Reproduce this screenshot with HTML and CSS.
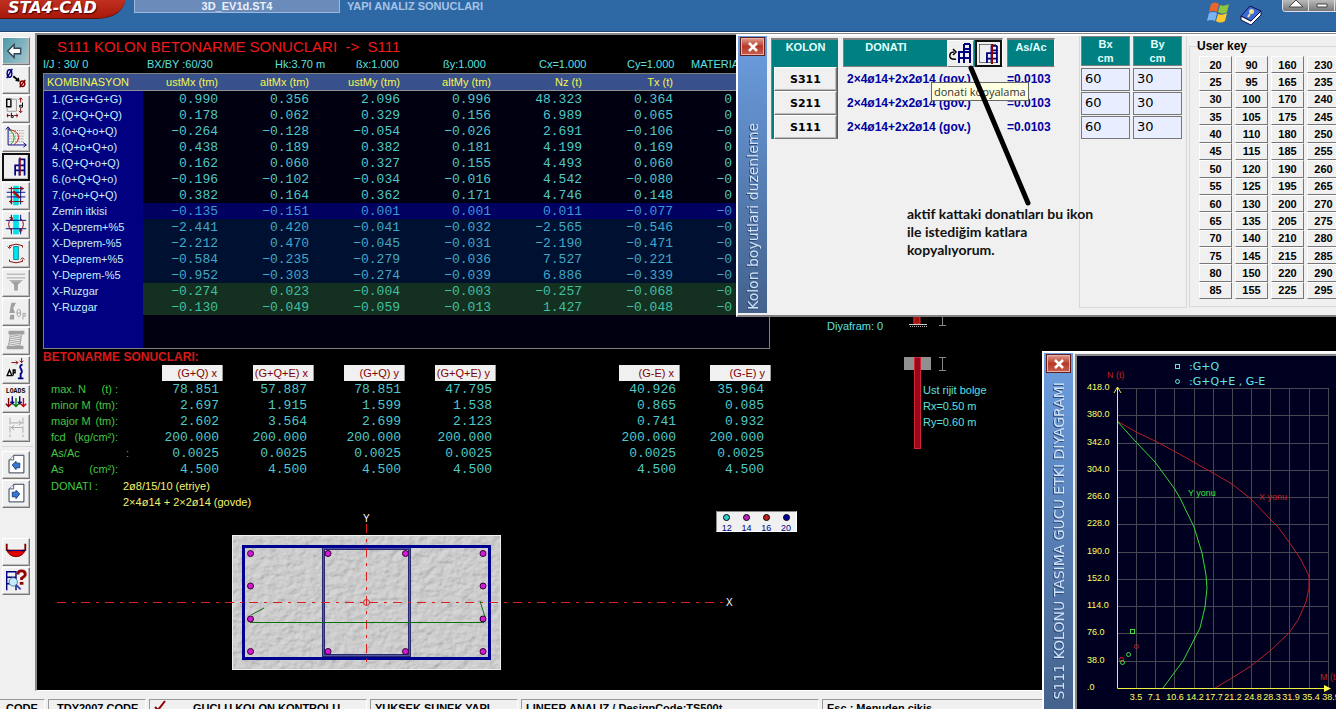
FILE: index.html
```html
<!DOCTYPE html>
<html lang="tr">
<head>
  <meta charset="UTF-8">
  <title>STA4-CAD</title>
  <meta name="viewport" content="width=device-width, initial-scale=1.0">
  <link rel="stylesheet" href="styles.css">
</head>
<body>
  <!-- Shared shapes -->
  <svg class="defs" width="0" height="0" aria-hidden="true">
    <symbol id="frame" viewBox="0 0 14 22">
      <path d="M2 21V10M7 21V2M13 21V2M7 2H13M7 7H13M1 10H14M1 16H14" fill="none" stroke="#000080" stroke-width="2"/>
    </symbol>
    <symbol id="page" viewBox="0 0 28 28">
      <path d="M6.500 8.500L11.500 3.500H22.500V22.500H6.500Z" fill="#fff" stroke="#234"/>
      <path d="M6.500 8.500H11.500V3.500" fill="#eef" stroke="#456"/>
    </symbol>
  </svg>

  <header class="topbar">
    <div class="logo">STA4-CAD</div>
    <div class="file-tab">3D_EV1d.ST4</div>
    <div class="page-name">YAPI ANALIZ SONUCLARI</div>
    <div class="top-icons">
      <svg width="24" height="24" viewBox="0 0 24 24">
        <path d="M4 2Q8 -1 12 2L10 10Q6 8 2 10Z" fill="#e8662c"/>
        <path d="M13 3Q17 5 22 2L20 10Q16 13 11 10Z" fill="#8cc63f"/>
        <path d="M2 11Q6 9 10 11L8 19Q4 17 0 19Z" fill="#7db4f0"/>
        <path d="M11 12Q15 14 20 11L18 19Q13 22 9 19Z" fill="#fbc92d"/>
      </svg>
      <svg width="24" height="24" viewBox="0 0 24 24">
        <path d="M2 14V18L12 23L22 13V9L12 19Z" fill="#fff" stroke="#114"/>
        <path d="M2 14L11 4L22 9L12 19Z" fill="#3a6ad8" stroke="#114"/>
        <circle cx="12.500" cy="9.500" r="2.500" fill="#f4e08a"/>
        <path d="M11 12L9 15" stroke="#f4e08a" stroke-width="2"/>
      </svg>
    </div>
    <div class="win-buttons">
      <button type="button" aria-label="Yukari"><svg width="16" height="9" viewBox="0 0 16 9"><path d="M1 7L8 0L15 7Z" fill="#fff" stroke="#444"/></svg></button>
      <button type="button" aria-label="Kucult"><svg width="16" height="9" viewBox="0 0 16 9"><path d="M3 4H13V7H3Z" fill="#fff" stroke="#444"/></svg></button>
      <button type="button" aria-label="Kapat"></button>
    </div>
  </header>

  <div class="workspace">
    <nav class="toolbar">
      <button type="button" class="back" aria-label="Geri"><svg viewBox="0 0 28 28"><path d="M5 14L12 7V11H19V17H12V21Z" fill="#fff" stroke="#345" stroke-width="1.500"/></svg></button>
      <button type="button" aria-label="Cap"><svg viewBox="0 0 28 28"><g fill="none" stroke-width="1.500"><ellipse cx="7" cy="7" rx="2.500" ry="4" stroke="#000080"/><path d="M4 12L10 2" stroke="#000080"/><ellipse cx="21" cy="18" rx="2.500" ry="3" stroke="#800000"/><path d="M18 22L24 14" stroke="#800000"/><path d="M11 10L16 14" stroke="#000" stroke-width="2"/></g><path d="M18 16L13 15L17 11Z"/></svg></button>
      <button type="button" aria-label="Boyut"><svg viewBox="0 0 28 28"><g fill="none"><path d="M4 3.500H8.500V11.500H4Z" stroke="#000" stroke-width="1.500"/><path d="M8 3.500H14.500V16.500H4.500V12" stroke="#999"/><path d="M19 2V7M17 4L19 2L21 4M19 13V18M17 16L19 18L21 16M4 21H8M5 19V23M12 21H16M15 19V23" stroke="#800000"/><path d="M21 7V12H18V10H21M9 18V23H11V21H9" stroke="#000"/></g></svg></button>
      <button type="button" aria-label="Diyagram"><svg viewBox="0 0 28 28"><path d="M7 6H22M7 9H22M7 12H22M7 15H22M7 18H22" stroke="#888" stroke-dasharray="1 1"/><path d="M6 5C18 6 20 15 12 21" fill="none" stroke="#c00000"/><path d="M6 5C12 8 15 15 8 21" fill="none" stroke="#00a000"/><path d="M5.500 3V21.500H25M3 5L5.500 2L8 5M22 19L25 21.500L22 24" fill="none" stroke="#000080"/></svg></button>
      <button type="button" class="pressed" aria-label="Kolon"><svg viewBox="0 0 28 28"><path d="M13 24V12M18 24V4M24 24V4M18 5H24M12 12H24M12 18H24" fill="none" stroke="#000080" stroke-width="2"/><path d="M18.500 3V24" stroke="#a00000" stroke-width="2"/></svg></button>
      <button type="button" aria-label="Kesme"><svg viewBox="0 0 28 28"><path d="M11 3H17V24H11Z" fill="#00e0e8"/><path d="M4 10H24M4 15H24M9 4V23M19 4V23" stroke="#000080" fill="none"/><path d="M6 6H22L19 4M22 6L19 8M22 20H7L10 18M7 20L10 22" fill="none" stroke="#800000"/><path d="M11 9L18 16" stroke="#c00000" stroke-width="2.500"/></svg></button>
      <button type="button" aria-label="Dugum"><svg viewBox="0 0 28 28"><path d="M11 3H17V24H11Z" fill="#00e0e8"/><path d="M3 9H25M3 18H25M9 3V9M19 3V9M9 18V24M19 18V24" stroke="#000080" fill="none"/><path d="M9 7Q3 13 9 20M19 7Q25 13 19 20M7 6L10 6V9M21 20L18 21V18" fill="none" stroke="#800000"/></svg></button>
      <button type="button" aria-label="Moment"><svg viewBox="0 0 28 28"><path d="M11.500 6H16.500V20H11.500Z" fill="#00e8f0" stroke="#008890"/><path d="M7 7V5Q14 2 21 5V7M7 20V22Q14 25 21 22V20M5 6L7 8L9 6M19 20L21 18L23 20" fill="none" stroke="#800000"/></svg></button>
      <button type="button" aria-label="Temel"><svg viewBox="0 0 28 28"><g fill="none" stroke="#a0a0a0"><path d="M4 4.500H24M4 8.500H24M7 11.500H21"/></g><path d="M8 12H20L16 16V22H12V16Z" fill="#a0a0a0"/></svg></button>
      <button type="button" aria-label="Donme"><svg viewBox="0 0 28 28"><path d="M9 4H14L11 10L13 15H7L8 9ZM8 17H12V22H7Z" fill="#a0a0a0"/><g fill="none" stroke="#a0a0a0"><ellipse cx="17" cy="15" rx="2" ry="4"/><path d="M15 15H19M21.500 22V15.500H24V18.500H22"/></g></svg></button>
      <button type="button" aria-label="Perde"><svg viewBox="0 0 28 28"><path d="M6 3H23V7H6ZM4 19H22V23H4Z" fill="#a0a0a0"/><path d="M8 7L20 9M8 9L20 11M8 11L20 13M7 13L19 15M7 15L19 17M6 17L18 19M8 7L6 19M20 7L18 19" stroke="#a0a0a0"/></svg></button>
      <button type="button" aria-label="Delta P"><svg viewBox="0 0 28 28"><path d="M9 6H16M14 4L16 6L14 8M20 1V6M18 4L20 6L22 4" fill="none" stroke="#800000"/><path d="M21 8C14 11 24 14 19 18V23M16 23H22" fill="none" stroke="#000080" stroke-width="2"/><path d="M4.500 20L7 14L9.500 20ZM11 20V14H13V17H11" fill="none" stroke="#000" stroke-width="1.500"/></svg></button>
      <button type="button" aria-label="Yukler"><svg viewBox="0 0 28 28"><text x="3" y="8" class="icon-text">LOADS</text><g fill="none" stroke-width="1.500"><path d="M6 13V22M3 19L6 22L9 19" stroke="#800000"/><path d="M10 11V19M8 17L10 19L12 17" stroke="#000080"/><path d="M14 13V22M11 19L14 22L17 19" stroke="#008000"/><path d="M18 11V19M16 17L18 19L20 17" stroke="#000080"/><path d="M22 13V22M19 19L22 22L25 19" stroke="#d00000"/></g></svg></button>
      <button type="button" aria-label="Aralik"><svg viewBox="0 0 28 28"><path d="M7.500 3V24M21.500 3V24" stroke="#a8a8a8" stroke-dasharray="7 2"/><path d="M8 8.500H20M17 6L20 8.500L17 11M21 13.500H9M12 11L9 13.500L12 16" fill="none" stroke="#a8a8a8"/></svg></button>
      <hr>
      <button type="button" aria-label="Onceki"><svg viewBox="0 0 28 28"><use href="#page"/><path d="M10 14L14 10V12H18V17H14V19Z" fill="#3878d0" stroke="#123a80"/></svg></button>
      <button type="button" aria-label="Sonraki"><svg viewBox="0 0 28 28"><use href="#page"/><path d="M18 14L14 10V12H10V17H14V19Z" fill="#3878d0" stroke="#123a80"/></svg></button>
      <button type="button" class="spaced" aria-label="Kesit"><svg viewBox="0 0 28 28"><path d="M4 12H24Q21 19 14 19Q7 19 4 12Z" fill="#e00000" stroke="#800000"/><path d="M4 5V12L8 13M24 5V12L20 13" fill="none" stroke="#800000" stroke-width="2"/><path d="M4 12.500H24" stroke="#000080"/></svg></button>
      <button type="button" aria-label="Sorgu"><svg viewBox="0 0 28 28"><path d="M4 24V4H14V24M4 10H14M4 17H9" fill="none" stroke="#000080" stroke-width="1.500"/><circle cx="11" cy="15" r="4.500" fill="#c8ecff" stroke="#4878a0"/><path d="M14 18L19 23" stroke="#4040a0" stroke-width="2"/><path d="M16 7Q16 3 20 3Q24 3 24 7Q24 9 20 11V13" fill="none" stroke="#900000" stroke-width="3"/><path d="M18 15H22V18H18Z" fill="#900000"/></svg></button>
    </nav>

    <main class="screen">
      <section class="report">
        <h1>S111 KOLON BETONARME SONUCLARI&nbsp; -&gt;&nbsp; S111</h1>
        <div class="params">
          <span>I/J : 30/ 0</span><span>BX/BY :60/30</span><span>Hk:3.70 m</span><span>ßx:1.000</span>
          <span>ßy:1.000</span><span>Cx=1.000</span><span>Cy=1.000</span><span>MATERIAL</span>
        </div>

        <div class="combos">
          <table>
            <thead>
              <tr><th>KOMBINASYON</th><th>ustMx (tm)</th><th>altMx (tm)</th><th>ustMy (tm)</th><th>altMy (tm)</th><th>Nz (t)</th><th>Tx (t)</th><th></th></tr>
            </thead>
            <tbody>
              <tr><th>1.(G+G+G+G)</th><td>0.990</td><td>0.356</td><td>2.096</td><td>0.996</td><td>48.323</td><td>0.364</td><td>0</td></tr>
              <tr><th>2.(Q+Q+Q+Q)</th><td>0.178</td><td>0.062</td><td>0.329</td><td>0.156</td><td>6.989</td><td>0.065</td><td>0</td></tr>
              <tr><th>3.(o+Q+o+Q)</th><td>−0.264</td><td>−0.128</td><td>−0.054</td><td>−0.026</td><td>2.691</td><td>−0.106</td><td>−0</td></tr>
              <tr><th>4.(Q+o+Q+o)</th><td>0.438</td><td>0.189</td><td>0.382</td><td>0.181</td><td>4.199</td><td>0.169</td><td>0</td></tr>
              <tr><th>5.(Q+Q+o+Q)</th><td>0.162</td><td>0.060</td><td>0.327</td><td>0.155</td><td>4.493</td><td>0.060</td><td>0</td></tr>
              <tr><th>6.(o+Q+Q+o)</th><td>−0.196</td><td>−0.102</td><td>−0.034</td><td>−0.016</td><td>4.542</td><td>−0.080</td><td>−0</td></tr>
              <tr><th>7.(o+o+Q+Q)</th><td>0.382</td><td>0.164</td><td>0.362</td><td>0.171</td><td>4.746</td><td>0.148</td><td>0</td></tr>
              <tr class="soil"><th>Zemin itkisi</th><td>−0.135</td><td>−0.151</td><td>0.001</td><td>0.001</td><td>0.011</td><td>−0.077</td><td>−0</td></tr>
              <tr class="quake"><th>X-Deprem+%5</th><td>−2.441</td><td>0.420</td><td>−0.041</td><td>−0.032</td><td>−2.565</td><td>−0.546</td><td>−0</td></tr>
              <tr class="quake"><th>X-Deprem-%5</th><td>−2.212</td><td>0.470</td><td>−0.045</td><td>−0.031</td><td>−2.190</td><td>−0.471</td><td>−0</td></tr>
              <tr class="quake"><th>Y-Deprem+%5</th><td>−0.584</td><td>−0.235</td><td>−0.279</td><td>−0.036</td><td>7.527</td><td>−0.221</td><td>−0</td></tr>
              <tr class="quake"><th>Y-Deprem-%5</th><td>−0.952</td><td>−0.303</td><td>−0.274</td><td>−0.039</td><td>6.886</td><td>−0.339</td><td>−0</td></tr>
              <tr class="wind"><th>X-Ruzgar</th><td>−0.274</td><td>0.023</td><td>−0.004</td><td>−0.003</td><td>−0.257</td><td>−0.068</td><td>−0</td></tr>
              <tr class="wind"><th>Y-Ruzgar</th><td>−0.130</td><td>−0.049</td><td>−0.059</td><td>−0.013</td><td>1.427</td><td>−0.048</td><td>−0</td></tr>
            </tbody>
          </table>
        </div>

        <h2>BETONARME SONUCLARI:</h2>
        <table class="design">
          <thead>
            <tr><th></th><th><span>(G+Q) x</span></th><th><span>(G+Q+E) x</span></th><th><span>(G+Q) y</span></th><th><span>(G+Q+E) y</span></th><th><span>(G-E) x</span></th><th><span>(G-E) y</span></th></tr>
          </thead>
          <tbody>
            <tr><th>max. N<i>(t) :</i></th><td>78.851</td><td>57.887</td><td>78.851</td><td>47.795</td><td>40.926</td><td>35.964</td></tr>
            <tr><th>minor M<i>(tm):</i></th><td>2.697</td><td>1.915</td><td>1.599</td><td>1.538</td><td>0.865</td><td>0.085</td></tr>
            <tr><th>major M<i>(tm):</i></th><td>2.602</td><td>3.564</td><td>2.699</td><td>2.123</td><td>0.741</td><td>0.932</td></tr>
            <tr><th>fcd<i>(kg/cm²):</i></th><td>200.000</td><td>200.000</td><td>200.000</td><td>200.000</td><td>200.000</td><td>200.000</td></tr>
            <tr><th class="wide">As/Ac<i>:</i></th><td>0.0025</td><td>0.0025</td><td>0.0025</td><td>0.0025</td><td>0.0025</td><td>0.0025</td></tr>
            <tr><th>As<i>(cm²):</i></th><td>4.500</td><td>4.500</td><td>4.500</td><td>4.500</td><td>4.500</td><td>4.500</td></tr>
          </tbody>
        </table>
        <dl class="rebar">
          <dt>DONATI :</dt>
          <dd>2ø8/15/10 (etriye)</dd>
          <dd>2×4ø14 + 2×2ø14 (govde)</dd>
        </dl>

        <!-- Column cross section with stirrups and bars -->
        <div class="section">
          <svg width="727" height="165" viewBox="43 511 727 165">
            <filter id="stone" x="0" y="0" width="100%" height="100%">
              <feTurbulence type="fractalNoise" baseFrequency="0.120 0.160" numOctaves="4" seed="4" result="n"/>
              <feDiffuseLighting in="n" lighting-color="#d8d8d8" surfaceScale="1.400">
                <feDistantLight azimuth="225" elevation="62"/>
              </feDiffuseLighting>
            </filter>
            <rect x="232" y="535" width="269" height="135" filter="url(#stone)"/>
            <rect x="232.500" y="535.500" width="268" height="134" fill="none" stroke="#f0f0f0"/>
            <rect x="323.500" y="548.500" width="86" height="107" fill="none" stroke="#28286c" stroke-width="3"/>
            <rect x="323.500" y="548.500" width="86" height="107" fill="none" stroke="#5858a0"/>
            <rect x="243.500" y="546.500" width="246" height="112" fill="none" stroke="#000090" stroke-width="3"/>
            <g stroke="#d82020" fill="none">
              <path d="M57 602.500H724M366.500 524V663" stroke-dasharray="9 6 3 6"/>
              <circle cx="366.500" cy="602.500" r="3"/>
            </g>
            <path d="M251 615L264 608M250 622.500H484M485 617L480 601" stroke="#107010" fill="none"/>
            <g fill="#d818d8" stroke="#300030">
              <circle cx="250.500" cy="553.500" r="3"/><circle cx="328" cy="553.500" r="3"/><circle cx="405.500" cy="553.500" r="3"/><circle cx="483" cy="553.500" r="3"/>
              <circle cx="250.500" cy="586" r="3"/><circle cx="483" cy="586" r="3"/>
              <circle cx="250.500" cy="619" r="3"/><circle cx="483" cy="619" r="3"/>
              <circle cx="250.500" cy="651.500" r="3"/><circle cx="328" cy="651.500" r="3"/><circle cx="405.500" cy="651.500" r="3"/><circle cx="483" cy="651.500" r="3"/>
            </g>
            <g class="axis-name"><text x="363" y="522">Y</text><text x="726" y="606">X</text></g>
          </svg>
          <ul class="bar-key">
            <li class="d12">12</li><li class="d14">14</li><li class="d16">16</li><li class="d20">20</li>
          </ul>
        </div>
      </section>

      <!-- Column elevation with rigid end zones -->
      <svg class="elevation" width="260" height="150" viewBox="777 310 260 150">
        <path d="M914 310H920V324H914Z" fill="#a01010" stroke="#e03030"/>
        <path d="M909 324.500H927" stroke="#ccc"/>
        <path d="M910 326.500H927" stroke="#aaa" stroke-dasharray="1 1"/>
        <path d="M942.500 310V325M939 325.500H946M942.500 357V370M939 357.500H946M939 370.500H946" stroke="#888"/>
        <rect x="904" y="357" width="27" height="13" fill="#909090"/>
        <rect x="914.500" y="357.500" width="6" height="91" fill="#980818" stroke="#d02838"/>
        <text x="827" y="330">Diyafram: 0</text>
        <text x="923" y="394">Ust rijit bolge</text>
        <text x="923" y="410">Rx=0.50 m</text>
        <text x="923" y="426">Ry=0.60 m</text>
      </svg>
    </main>
  </div>

  <footer class="statusbar">
    <div class="cell code">CODE</div>
    <div class="cell tdy">TDY2007 CODE</div>
    <div class="cell strong"><svg width="12" height="12" viewBox="0 0 12 12"><path d="M1 7L4 10L11 1" fill="none" stroke="#900000" stroke-width="2"/></svg>GUCLU KOLON KONTROLU</div>
    <div class="cell ductile">YUKSEK SUNEK YAPI</div>
    <div class="cell linear">LINEER ANALIZ / DesignCode:TS500t</div>
    <div class="cell esc">Esc : Menuden cikis</div>
  </footer>

  <!-- Column size editor -->
  <section class="window sizes">
    <div class="titlebar">
      <button type="button" class="close" aria-label="Kapat"><svg width="10" height="10" viewBox="0 0 10 10"><path d="M1 1L9 9M9 1L1 9" stroke="#fff" stroke-width="2.500"/></svg></button>
      <span>Kolon boyutlari duzenleme</span>
    </div>
    <div class="window-body">
      <div class="col kolon">
        <h3>KOLON</h3>
        <button type="button">S311</button>
        <button type="button">S211</button>
        <button type="button">S111</button>
      </div>
      <div class="col donati">
        <div class="donati-head">
          <h3>DONATI</h3>
          <button type="button" aria-label="donati kopyalama"><svg width="24" height="24" viewBox="0 0 24 24"><path d="M6 10Q1 10 2 15Q3 18 8 17M5 7L8 10L5 13" fill="none" stroke="#000" stroke-width="1.500"/><use href="#frame" x="9" y="0" width="14" height="22"/></svg></button>
          <button type="button" class="pressed" aria-label="donati secimi"><svg width="24" height="24" viewBox="0 0 24 24"><path d="M2.500 2.500H19M2.500 2.500V20.500H19" fill="none" stroke="#000" stroke-dasharray="1 1"/><use href="#frame" x="8" y="2" width="13" height="20"/><path d="M15 2V22" stroke="#900000" stroke-width="2"/></svg></button>
        </div>
        <p>2×4ø14+2x2ø14 (gov.)</p>
        <p>2×4ø14+2x2ø14 (gov.)</p>
        <p>2×4ø14+2x2ø14 (gov.)</p>
      </div>
      <div class="col ratio">
        <h3>As/Ac</h3>
        <p>=0.0103</p>
        <p>=0.0103</p>
        <p>=0.0103</p>
      </div>
      <div class="dims">
        <div class="dim">
          <h3>Bx<br>cm</h3>
          <input type="text" value="60" aria-label="S311 Bx">
          <input type="text" value="60" aria-label="S211 Bx">
          <input type="text" value="60" aria-label="S111 Bx">
        </div>
        <div class="dim">
          <h3>By<br>cm</h3>
          <input type="text" value="30" aria-label="S311 By">
          <input type="text" value="30" aria-label="S211 By">
          <input type="text" value="30" aria-label="S111 By">
        </div>
      </div>
      <fieldset class="keys">
        <legend>User key</legend>
        <div class="key-grid">
          <button type="button">20</button><button type="button">25</button><button type="button">30</button><button type="button">35</button><button type="button">40</button><button type="button">45</button><button type="button">50</button><button type="button">55</button><button type="button">60</button><button type="button">65</button><button type="button">70</button><button type="button">75</button><button type="button">80</button><button type="button">85</button>
          <button type="button">90</button><button type="button">95</button><button type="button">100</button><button type="button">105</button><button type="button">110</button><button type="button">115</button><button type="button">120</button><button type="button">125</button><button type="button">130</button><button type="button">135</button><button type="button">140</button><button type="button">145</button><button type="button">150</button><button type="button">155</button>
          <button type="button">160</button><button type="button">165</button><button type="button">170</button><button type="button">175</button><button type="button">180</button><button type="button">185</button><button type="button">190</button><button type="button">195</button><button type="button">200</button><button type="button">205</button><button type="button">210</button><button type="button">215</button><button type="button">220</button><button type="button">225</button>
          <button type="button">230</button><button type="button">235</button><button type="button">240</button><button type="button">245</button><button type="button">250</button><button type="button">255</button><button type="button">260</button><button type="button">265</button><button type="button">270</button><button type="button">275</button><button type="button">280</button><button type="button">285</button><button type="button">290</button><button type="button">295</button>
        </div>
      </fieldset>
    </div>
    <div class="tooltip" role="tooltip">donati kopyalama</div>
    <svg class="pointer" width="70" height="145" viewBox="0 0 70 145"><path d="M5 3L62 138" stroke="#000" stroke-width="5" stroke-linecap="round"/></svg>
    <p class="note">aktif kattaki donatıları bu ikon<br>ile istediğim katlara<br>kopyalıyorum.</p>
  </section>

  <!-- Interaction diagram -->
  <section class="window diagram">
    <div class="titlebar">
      <button type="button" class="close" aria-label="Kapat"><svg width="10" height="10" viewBox="0 0 10 10"><path d="M1 1L9 9M9 1L1 9" stroke="#fff" stroke-width="2.500"/></svg></button>
      <span>S111 KOLONU TASIMA GUCU ETKI DIYAGRAMI</span>
    </div>
    <div class="plot">
      <svg width="262" height="353" viewBox="1077 356 262 353">
        <path stroke="#484850" fill="none" d="M1136.500 388V688M1155.500 388V688M1174.500 388V688M1194.500 388V688M1213.500 388V688M1232.500 388V688M1251.500 388V688M1270.500 388V688M1289.500 388V688M1309.500 388V688M1328.500 388V688
          M1118 388.500H1328M1118 415.500H1328M1118 443.500H1328M1118 470.500H1328M1118 497.500H1328M1118 524.500H1328M1118 552.500H1328M1118 579.500H1328M1118 606.500H1328M1118 633.500H1328M1118 661.500H1328"/>
        <polyline stroke="#b82020" fill="none" points="1117,421 1136,432 1155,441 1174,451 1213,473 1232,484 1251,499 1270,519 1278,527 1289,542 1300,558 1309,576 1309,588 1306,602 1298,620 1289,633 1271,650 1251,666 1232,678 1215,688"/>
        <polyline stroke="#38d838" fill="none" points="1117,421 1136,442 1155,462 1174,488 1180,498 1194,527 1202,553 1206,575 1207,588 1205,607 1200,628 1183,661 1174,673 1163,688"/>
        <path d="M1117.500 387V688.500H1328M1114 393L1117.500 387L1121 393" stroke="#f0f040" fill="none"/>
        <path d="M1324 685L1331 688.500L1324 692Z" fill="#ffff40"/>
        <g fill="none">
          <rect x="1130.500" y="629.500" width="4" height="4" stroke="#40e040"/>
          <circle cx="1128.500" cy="654.500" r="2" stroke="#40e040"/>
          <circle cx="1121.500" cy="659.500" r="2" stroke="#d02020"/>
          <circle cx="1122.500" cy="662.500" r="2" stroke="#40e040"/>
          <circle cx="1136.500" cy="646.500" r="2" stroke="#b82020"/>
          <rect x="1175.500" y="364.500" width="4" height="4" stroke="#60e8e8"/>
          <circle cx="1177.500" cy="381.500" r="2" stroke="#60e8e8"/>
        </g>
        <g class="legend"><text x="1189" y="370">:G+Q</text><text x="1189" y="385">:G+Q+E , G-E</text></g>
        <g class="red"><text x="1107" y="378">N (t)</text><text x="1259" y="500">X yonu</text><text x="1320" y="680">M (tm)</text></g>
        <text class="green" x="1188" y="496">Y yonu</text>
        <g class="ticks">
          <text x="1087" y="390">418.0</text><text x="1087" y="417">380.0</text><text x="1087" y="445">342.0</text><text x="1087" y="472">304.0</text><text x="1087" y="499">266.0</text><text x="1087" y="526">228.0</text><text x="1087" y="554">190.0</text><text x="1087" y="581">152.0</text><text x="1087" y="608">114.0</text><text x="1087" y="635">76.0</text><text x="1087" y="663">38.0</text><text x="1087" y="690">.0</text>
        </g>
        <g class="ticks mid">
          <text x="1136" y="700">3.5</text><text x="1154" y="700">7.1</text><text x="1175" y="700">10.6</text><text x="1195" y="700">14.2</text><text x="1214" y="700">17.7</text><text x="1233" y="700">21.2</text><text x="1253" y="700">24.8</text><text x="1272" y="700">28.3</text><text x="1291" y="700">31.9</text><text x="1311" y="700">35.4</text><text x="1331" y="700">38.9</text>
        </g>
      </svg>
    </div>
  </section>
</body>
</html>
```
FILE: styles.css
```css
* {
  box-sizing: border-box;
}

body {
  margin: 0;
  height: 100vh;
  display: flex;
  flex-direction: column;
  overflow: hidden;
  position: relative;
  background: #f0f0f0;
  font-family: "Liberation Sans", Arial, sans-serif;
  font-size: 12px;
}

h1, h2, h3, p, dl, dd, ul {
  margin: 0;
  padding: 0;
}

button {
  font-family: inherit;
  padding: 0;
  color: #000;
  background: #f0f0f0;
  border: 1px solid;
  border-color: #fff #777 #777 #fff;
}

svg {
  display: block;
}

.defs {
  position: absolute;
}

/* Top bar */
.topbar {
  flex: none;
  display: flex;
  align-items: flex-start;
  height: 32px;
  background: #2f69a5;
  border-bottom: 1px solid #23466e;
}

.logo {
  width: 125px;
  height: 19px;
  padding-left: 8px;
  font: italic bold 16px/15px "DejaVu Sans", sans-serif;
  color: #fff;
  text-shadow: 1px 1px 1px #400;
  background: linear-gradient(#c03020, #a81808);
  border-bottom: 1px solid #601008;
  border-bottom-right-radius: 28px 19px;
}

.file-tab {
  width: 206px;
  height: 13px;
  margin-left: 9px;
  line-height: 13px;
  text-align: center;
  font-size: 11px;
  font-weight: bold;
  color: #e8f0fc;
  background: #6b8cba;
  border: 1px solid #9cb8dc;
  border-width: 0 1px 1px;
}

.page-name {
  margin-left: 7px;
  line-height: 13px;
  font-size: 11px;
  font-weight: bold;
  color: #a6c3e6;
}

.top-icons {
  display: flex;
  gap: 8px;
  margin: 2px 19px 0 auto;
}

.win-buttons {
  display: flex;
  width: 54px;
  height: 12px;
  overflow: hidden;
  border: 1px solid #dde;
  border-top: 0;
  border-right: 0;
  border-bottom-left-radius: 4px;
}

.win-buttons button {
  flex: none;
  width: 26px;
  display: flex;
  justify-content: center;
  background: linear-gradient(#bbb, #777);
  border: 0;
  border-right: 1px solid #ddd;
}

/* Toolbar */
.workspace {
  flex: 1;
  min-height: 0;
  display: flex;
  border-top: 1px solid #fff;
}

.toolbar {
  flex: none;
  width: 35px;
  padding: 4px 0 0 2px;
}

.toolbar button {
  display: block;
  width: 28px;
  height: 28px;
  margin-bottom: 1px;
  box-shadow: inset -1px -1px #bbb;
}

.toolbar svg {
  width: 26px;
  height: 26px;
}

.toolbar .back {
  background: linear-gradient(120deg, #4f98a8, #a8c8d0);
}

.toolbar .pressed {
  border: 2px solid #111;
}

.toolbar .pressed svg {
  width: 24px;
  height: 24px;
}

.toolbar hr {
  margin: 4px 2px 4px 0;
  border: 0;
  border-top: 1px solid #d8d8d8;
}

.toolbar .spaced {
  margin-top: 30px;
}

.icon-text {
  font: bold 7px "Liberation Mono", monospace;
}

/* Results screen */
.screen {
  flex: 1;
  min-width: 0;
  display: flex;
  align-items: flex-start;
  padding: 3px 0 0 6px;
  overflow: hidden;
  background: #000;
  border: 2px solid #888;
  border-right: 0;
  border-bottom: 1px solid #fff;
  font-size: 11px;
  color: #5ce0e0;
}

.report {
  flex: none;
  width: 727px;
}

.report h1 {
  padding-left: 14px;
  font-size: 15px;
  font-weight: normal;
  line-height: 17px;
  color: #f01818;
}

.params {
  display: grid;
  grid-template-columns: 104px 128px 81px 87px 96px 88px 64px 1fr;
  line-height: 18px;
}

.combos {
  height: 276px;
  border: 1px solid #808080;
  background: linear-gradient(90deg, #000080 99px, #000010 99px);
}

table {
  border-collapse: collapse;
  table-layout: fixed;
  width: 100%;
}

th, td {
  padding: 1px 4px 0 0;
  font-size: 11px;
  line-height: 15px;
  height: 16px;
  text-align: right;
  font-weight: normal;
}

td {
  font-family: "Liberation Mono", monospace;
  font-size: 13px;
  color: #50c8c8;
}

.combos thead th {
  width: 91px;
  color: #f4f450;
  background: #38508c;
  border-bottom: 1px solid #909090;
}

.combos thead th:first-child {
  width: 99px;
  padding-left: 3px;
  text-align: left;
}

.combos thead th:nth-child(2) {
  width: 79px;
}

.combos thead th:last-child {
  width: auto;
}

.combos tbody th {
  padding-left: 8px;
  text-align: left;
  color: #c8f0f8;
}

.combos td:last-child {
  padding-right: 37px;
}

.soil td {
  background: #000060;
  color: #3c98d8;
}

.quake td {
  background: #001030;
  color: #40a8c8;
}

.wind td {
  background: #143020;
  color: #40c0a0;
}

.report h2 {
  font-size: 12px;
  line-height: 16px;
  color: #d81818;
}

.design {
  width: 728px;
}

.design thead th {
  width: 91px;
  padding: 0;
}

.design thead th:first-child {
  width: 89px;
}

.design thead th:nth-child(6) {
  width: 184px;
}

.design thead span {
  display: block;
  width: 61px;
  margin-left: auto;
  padding-right: 5px;
  line-height: 16px;
  white-space: nowrap;
  color: #800000;
  background: #f0f0f0;
  border-right: 1px solid #999;
}

.design tbody th {
  padding: 1px 14px 0 8px;
  text-align: left;
  color: #40c840;
}

.design i {
  float: right;
  font-style: normal;
}

.design tbody .wide {
  padding-right: 3px;
}

.design tbody td {
  padding-top: 0;
}

.design td:nth-child(3),
.design td:nth-child(7) {
  padding-right: 7px;
}

.rebar {
  display: grid;
  grid-template-columns: 72px 1fr;
  padding: 1px 0 1px 8px;
  line-height: 16px;
  color: #f4f470;
}

.rebar dt {
  color: #40c840;
}

.rebar dd {
  grid-column: 2;
}

.section {
  position: relative;
}

.axis-name {
  font-size: 10px;
  fill: #fff;
}

.bar-key {
  position: absolute;
  top: 0;
  left: 673px;
  display: flex;
  width: 81px;
  height: 21px;
  list-style: none;
  background: #f0f0f0;
  border: 1px solid #888;
  border-color: #888 #fff #fff #888;
}

.bar-key li {
  flex: 1;
  font-size: 9px;
  line-height: 10px;
  text-align: center;
  color: #000080;
}

.bar-key li::before {
  content: "";
  display: block;
  width: 5px;
  height: 5px;
  margin: 2px auto;
  border: 1px solid #000;
  border-radius: 50%;
}

.d12::before { background: #30d0d0; }
.d14::before { background: #c020c0; }
.d16::before { background: #c02020; }
.d20::before { background: #0000a0; }

.elevation {
  flex: none;
  margin: 272px 0 0 7px;
}

.elevation text {
  font-size: 11px;
  fill: #5ce0e0;
}

/* Status bar */
.statusbar {
  flex: none;
  display: flex;
  gap: 3px;
  height: 18px;
  padding-top: 8px;
  overflow: hidden;
}

.cell {
  flex: none;
  height: 18px;
  padding-left: 4px;
  border: 1px solid #999;
  border-color: #999 #fff #fff #999;
  font-size: 11px;
  font-weight: bold;
  line-height: 16px;
  color: #000;
  white-space: nowrap;
}

.code {
  width: 45px;
  padding-left: 6px;
  border-left: 0;
}

.tdy {
  width: 98px;
  padding-left: 8px;
}

.strong {
  display: flex;
  gap: 27px;
  width: 218px;
}

.ductile {
  width: 148px;
}

.linear {
  width: 298px;
}

.esc {
  flex: 1;
}

/* Floating windows */
.window {
  position: absolute;
  right: 0;
  display: flex;
  overflow: hidden;
  background: #f0f0f0;
  border: 2px solid #fff;
  border-right: 0;
}

.titlebar {
  flex: none;
  display: flex;
  flex-direction: column;
  align-items: center;
  width: 29px;
  background: linear-gradient(#6c9ee0, #44628c);
}

.titlebar span {
  writing-mode: vertical-rl;
  transform: rotate(180deg);
  font: 14px/20px "DejaVu Sans", Verdana, sans-serif;
  color: #d0e4fc;
  text-shadow: -1px -1px #304870;
  white-space: nowrap;
}

.close {
  flex: none;
  display: flex;
  align-items: center;
  justify-content: center;
  width: 25px;
  height: 19px;
  margin-top: 1px;
  background: linear-gradient(#e0a090, #b83828 50%, #c86050);
  border: 1px solid #5c2020;
  box-shadow: inset 0 0 0 1px #e8b0a8;
}

.sizes {
  top: 34px;
  left: 736px;
  height: 283px;
  border-bottom-color: #808080;
}

.sizes .titlebar {
  margin-bottom: 2px;
}

.sizes .titlebar span {
  margin-top: auto;
  padding-top: 3px;
}

.window-body {
  flex: 1;
  display: flex;
  align-items: flex-start;
  padding-left: 4px;
}

.col, .dim {
  flex: none;
  color: #0000a0;
}

.col {
  margin-top: 2px;
}

.sizes h3 {
  font-size: 11px;
  line-height: 15px;
  text-align: center;
  color: #e0ffff;
  background: #008080;
}

.kolon {
  width: 67px;
  padding: 0 1px 0 2px;
  background: #008080;
  border-top: 2px solid #808080;
  border-left: 1px solid #808080;
}

.kolon h3 {
  height: 27px;
}

.kolon button {
  display: block;
  width: 100%;
  height: 24px;
  font: bold 11px "DejaVu Sans", sans-serif;
  box-shadow: inset -1px -1px #bbb;
}

.donati {
  width: 160px;
  margin-left: 5px;
}

.donati-head {
  display: flex;
  height: 29px;
  background: #008080;
  border: 1px solid #808080;
  border-top-width: 2px;
  border-right-color: #fff;
}

.donati-head h3 {
  flex: 1;
  padding-right: 18px;
}

.donati-head button {
  width: 27px;
  height: 27px;
  margin-left: 1px;
}

.donati-head .pressed {
  border: 2px solid #111;
}

.col p {
  padding-left: 4px;
  font-size: 12px;
  font-weight: bold;
  line-height: 24px;
  white-space: nowrap;
}

.ratio {
  width: 48px;
  margin-left: 4px;
}

.ratio h3 {
  height: 29px;
  border: 1px solid #808080;
  border-top-width: 2px;
  border-right-color: #fff;
}

.col.ratio p {
  padding: 0;
}

.dims {
  flex: none;
  display: flex;
  gap: 3px;
  height: 272px;
  margin-left: 24px;
  padding: 0 4px 0 1px;
  border: 1px solid #d8d8d8;
  border-width: 0 1px 1px;
}

.dim {
  width: 49px;
}

.dim h3 {
  height: 30px;
  margin-bottom: 2px;
  line-height: 14px;
  border: 1px solid #808080;
}

.dim input {
  display: block;
  width: 49px;
  height: 23px;
  margin-bottom: 1px;
  padding: 0 3px 2px;
  font: 13px "DejaVu Sans", sans-serif;
  background: #e8eeff;
  border: 1px solid #777;
}

.keys {
  flex: none;
  margin: 0 0 0 2px;
  padding: 0 9px;
  border: 1px solid #d8d8d8;
  height: 271px;
}

.keys legend {
  margin-left: -2px;
  padding: 0;
  line-height: 20px;
  font-size: 12px;
  font-weight: bold;
}

.key-grid {
  display: grid;
  grid-auto-flow: column;
  grid-template-rows: repeat(14, 1fr);
  grid-auto-columns: 33px;
  column-gap: 3px;
  height: 243px;
}

.key-grid button {
  font-size: 11px;
  font-weight: bold;
  min-height: 0;
  line-height: 14px;
}

.tooltip {
  position: absolute;
  top: 46px;
  left: 193px;
  padding: 0 2px;
  font: 11px/17px "Open Sans", sans-serif;
  color: #333;
  background: #ffffe1;
  border: 1px solid #666;
}

.pointer {
  position: absolute;
  top: 29px;
  left: 228px;
}

.note {
  position: absolute;
  top: 169px;
  left: 169px;
  font: bold 14px/18px Lato, sans-serif;
  color: #111;
}

.diagram {
  top: 351px;
  bottom: 0;
  left: 1042px;
  border-bottom: 0;
}

.diagram .titlebar span {
  margin-top: 9px;
}

.plot {
  flex: 1;
  margin: 1px 0 0 2px;
  background: #000020;
  border: 2px solid #888;
  border-width: 2px 0 0 2px;
}

.plot text {
  font: 9px "Liberation Sans", sans-serif;
}

.plot .legend text {
  font: 11px "DejaVu Sans", sans-serif;
  fill: #60e8e8;
}

.plot .red text { fill: #c02020; }
.plot .green { fill: #40e040; }
.plot .ticks text { fill: #ffff60; }

.plot .mid {
  text-anchor: middle;
}
```
